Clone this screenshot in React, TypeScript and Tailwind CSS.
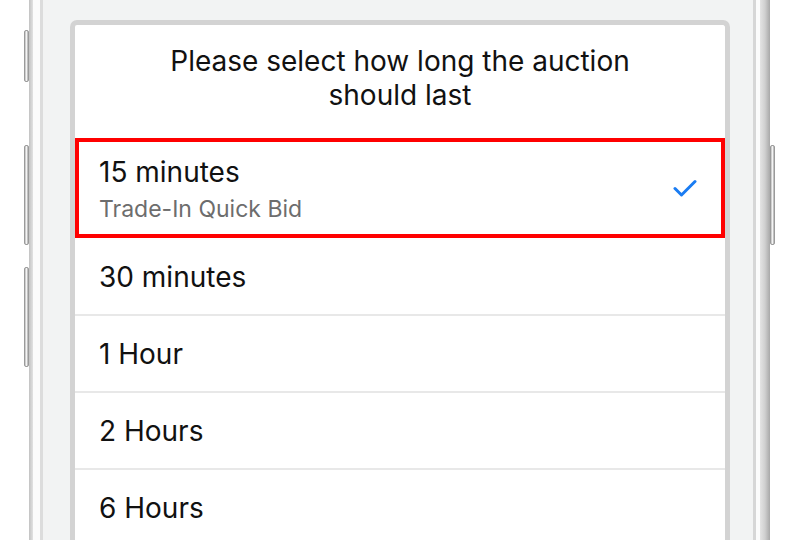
import React from "react";

type Option = {
    label: string;
    note?: string;
    selected?: boolean;
};

const options: Option[] = [
    { label: "15 minutes", note: "Trade-In Quick Bid", selected: true },
    { label: "30 minutes" },
    { label: "1 Hour" },
    { label: "2 Hours" },
    { label: "6 Hours" },
];

function SideButton({ className }: { className: string }) {
    return (
        <div
            className={`w-[5px] rounded-[2px] border border-[#9a9a9a] bg-gradient-to-r from-[#bdbdbd] via-[#f4f4f4] to-[#a9a9a9] ${className}`}
        />
    );
}

function CheckMark() {
    return (
        <svg width="24" height="19" viewBox="0 0 24 19" fill="none">
            <path
                d="M2 9.5 L8.5 16 L22 2.5"
                stroke="#1a7cf2"
                strokeWidth={3}
                strokeLinecap="round"
                strokeLinejoin="round"
            />
        </svg>
    );
}

export default function App() {
    return (
        <div
            className="w-[800px] h-[540px] bg-white overflow-hidden flex"
            style={{ fontFamily: "Inter, 'Noto Sans', sans-serif" }}
        >
            {/* left buttons */}
            <div className="w-[29px] flex flex-col items-end shrink-0">
                <SideButton className="mt-[30px] h-[52px]" />
                <SideButton className="mt-[63px] h-[100px]" />
                <SideButton className="mt-[22px] h-[100px]" />
            </div>

            {/* left edge of the phone */}
            <div className="w-[14px] h-full flex shrink-0">
                <div className="w-[4px] bg-gradient-to-r from-[#c2c2c2] to-[#e2e2e2]" />
                <div className="w-[7px] bg-[#fbfbfb]" />
                <div className="w-[3px] bg-[#dcdcdc]" />
            </div>

            {/* phone body */}
            <div className="w-[710px] h-full bg-[#f2f3f3] pl-[27px] pr-[23px] pt-[20px] shrink-0">
                <div className="h-full border-[5px] border-b-0 border-[#d3d3d3] rounded-t-[7px] bg-white flex flex-col">
                    <div className="h-[113px] shrink-0 flex items-center justify-center pb-[8px]">
                        <p className="text-center text-[28px] leading-[34px] text-[#111]">
                            Please select how long the auction
                            <br />
                            should last
                        </p>
                    </div>

                    {options.map((o) =>
                        o.selected ? (
                            <div
                                key={o.label}
                                className="h-[100px] shrink-0 mb-[1px] border-4 border-[#ff0000] flex items-center justify-between pl-[20px] pr-[24px]"
                            >
                                <div className="flex flex-col pt-[2px]">
                                    <span className="text-[28px] leading-[34px] text-[#111]">{o.label}</span>
                                    <span className="text-[23px] leading-[30px] text-[#6d6d6d] mt-[5px]">{o.note}</span>
                                </div>
                                <CheckMark />
                            </div>
                        ) : (
                            <div
                                key={o.label}
                                className="h-[77px] shrink-0 border-b-2 border-[#e8e8e8] flex items-center pl-[24px]"
                            >
                                <span className="text-[28px] text-[#111]">{o.label}</span>
                            </div>
                        )
                    )}
                </div>
            </div>

            {/* right edge of the phone */}
            <div className="w-[17px] h-full flex shrink-0">
                <div className="w-[3px] bg-[#d6d6d6]" />
                <div className="w-[4px] bg-[#fbfbfb]" />
                <div className="w-[10px] bg-gradient-to-r from-[#e4e4e4] via-[#cfcfcf] to-[#a8a8a8]" />
            </div>

            {/* right button */}
            <div className="w-[6px] flex flex-col shrink-0">
                <SideButton className="mt-[145px] h-[100px]" />
            </div>
        </div>
    );
}
